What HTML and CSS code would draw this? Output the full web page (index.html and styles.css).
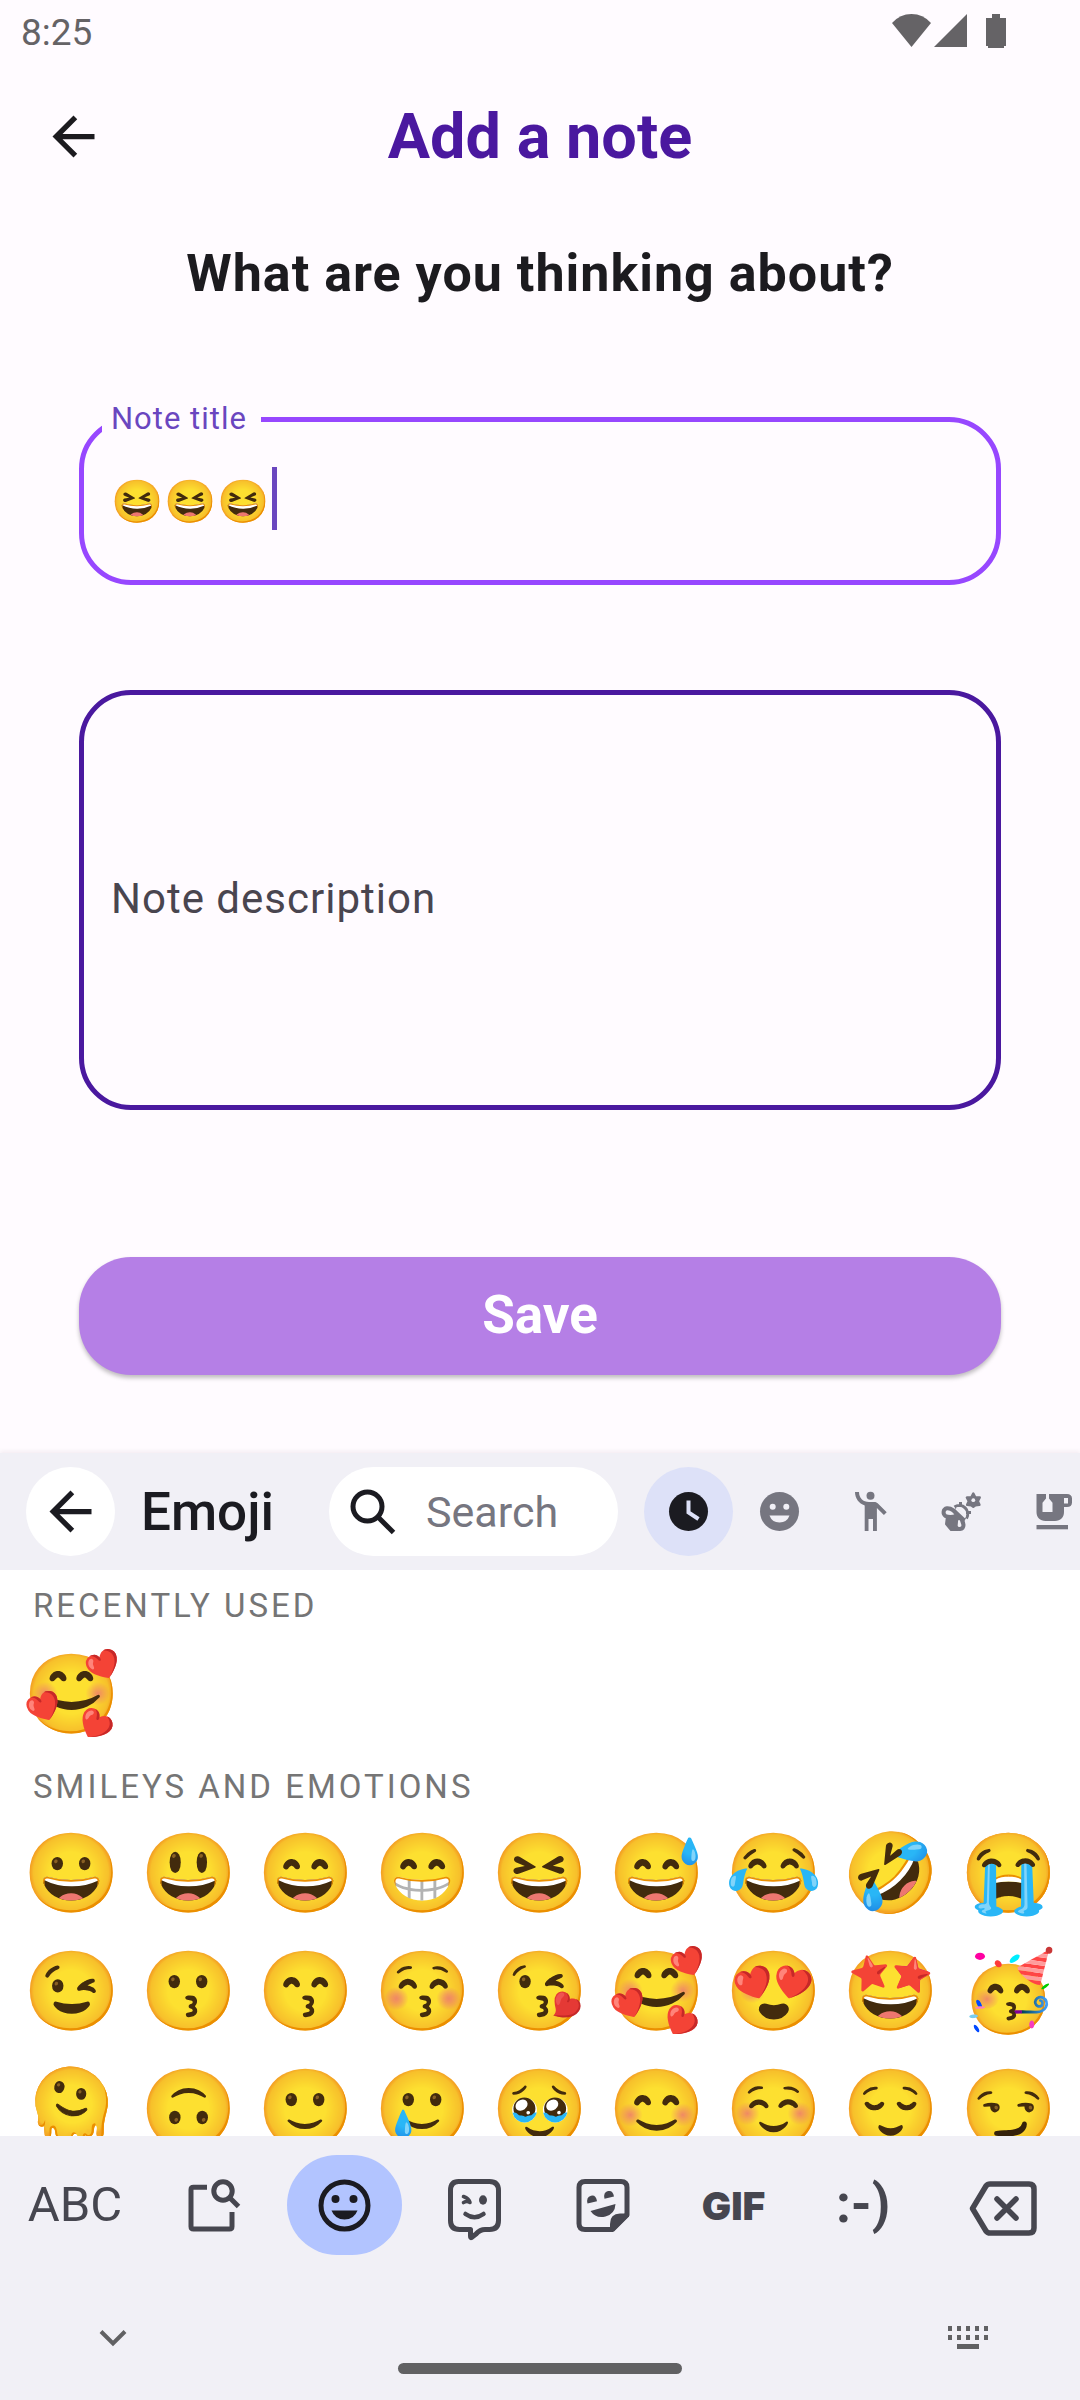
FILE: index.html
```
<!DOCTYPE html>
<html lang="en">
<head>
<meta charset="utf-8">
<meta name="viewport" content="width=device-width, initial-scale=1">
<title>Add a note</title>
<link rel="stylesheet" href="styles.css">
</head>
<body>
<div class="screen">
  <div class="status-bar">
    <span class="clock">8:25</span>
    <svg class="status-icons" viewBox="0 0 114 34" aria-hidden="true">
      <path d="M0 9Q8 0 19.500 0T39 9L19.500 33Z"/>
      <path d="M42 33L75 0V33Z"/>
      <path d="M100 0h8v4h6v28h-2v2h-16v-2h-2V4h6z"/>
    </svg>
  </div>

  <header class="app-bar">
    <button class="icon-button" type="button" aria-label="Back">
      <svg class="icon-back" viewBox="0 0 24 24"><path d="M20 11H7.830l5.590-5.590L12 4l-8 8 8 8 1.410-1.410L7.830 13H20z"/></svg>
    </button>
    <h1 class="title">Add a note</h1>
  </header>

  <main class="content">
    <form class="note-form">
      <h2 class="prompt">What are you thinking about?</h2>
      <fieldset class="title-field">
        <legend class="legend"><label for="note-title">Note title</label></legend>
        <div class="title-row">
          <input class="title-input" id="note-title" type="text" value="😆😆😆">
          <span class="caret"></span>
        </div>
      </fieldset>
      <textarea class="description" rows="1" placeholder="Note description" aria-label="Note description"></textarea>
      <button class="save" type="button">Save</button>
    </form>
  </main>

  <section class="keyboard" aria-label="Emoji keyboard">
    <div class="toolbar">
      <button class="round back" type="button" aria-label="Close emoji">
        <svg class="icon-back" viewBox="0 0 24 24"><path d="M20 11H7.830l5.590-5.590L12 4l-8 8 8 8 1.410-1.410L7.830 13H20z"/></svg>
      </button>
      <h2 class="toolbar-title">Emoji</h2>
      <label class="search">
        <svg class="icon-search" viewBox="0 0 46 46" fill="none" stroke="currentColor" stroke-width="5"><circle cx="17.500" cy="17.500" r="14.500"/><path d="M28 28L43.500 43.500"/></svg>
        <input class="search-input" type="text" placeholder="Search" aria-label="Search">
      </label>
      <div class="tabs">
        <button class="round tab active" type="button" aria-label="Recent">
          <svg class="icon-tab" viewBox="0 0 47 47"><circle cx="23.500" cy="23.500" r="19.500"/><path class="cut-line" d="M23.500 12.500V24.500L33.500 31"/></svg>
        </button>
        <button class="round tab" type="button" aria-label="Smileys">
          <svg class="icon-tab" viewBox="0 0 47 47"><circle cx="23.500" cy="23.500" r="19.500"/><g class="cut"><circle cx="16.700" cy="18.800" r="3"/><circle cx="30.300" cy="18.800" r="3"/><path d="M13.500 27.500H33.500Q31 34.500 23.500 34.500T13.500 27.500Z"/></g></svg>
        </button>
        <button class="round tab" type="button" aria-label="People">
          <svg class="icon-tab" viewBox="0 0 47 47"><circle cx="23.500" cy="7.800" r="4"/><path d="M8 4h4c0 6 4 10 10 10h5c2 0 3 .6 4.200 1.800L39.700 24.200l-2.800 2.800-7-7V43H26V31h-4.500V43H17.700V17.500C12 15.500 8 10.500 8 4z"/></svg>
        </button>
        <button class="round tab" type="button" aria-label="Animals and nature">
          <svg class="icon-tab" viewBox="0 0 47 47">
            <path d="M35.300 5.500l1.900 3.800 4.500.2-1.900 3.700 1.600 3.600-4 .4-2.100 1.500-2.100-1.500-4-.4 1.600-3.600-1.900-3.700 4.500-.2z" stroke="currentColor" stroke-width="2.500" stroke-linejoin="round"/><circle class="cut" cx="35.300" cy="12.200" r="1.900"/>
            <path d="M9 28L18 21L27 30L20 42H13L8 36Z" stroke="currentColor" stroke-width="2" stroke-linejoin="round"/>
            <path d="M16.500 19a8.500 8.500 0 0 1 12 11.500M22.500 14v5M28 24.500h5" fill="none" stroke="currentColor" stroke-width="3"/>
            <path class="wing" d="M18 28Q12 30 7.500 28C4.500 26 5 21 9 20.300C14 20 17.500 24 19.500 28"/>
            <path class="wing" d="M20.500 27.500Q25 32 25.500 37C25.500 42 18.500 42.500 17.700 38Q17.500 32 20.500 27.500"/>
            <path class="cut-thin" d="M18 20.500l9.500 9"/>
          </svg>
        </button>
        <button class="round tab" type="button" aria-label="Food and drink">
          <svg class="icon-tab" viewBox="0 0 47 47"><path fill-rule="evenodd" d="M7.500 6H17v4.500l-3.500 4.200V24h10V14.700L20 10.500V6h18c3 0 5 1.500 5 4.500v4c0 3-2 4.500-5 4.500h-3v5c0 5.500-3.500 9-9 9H16.500c-5.500 0-9-3.500-9-9zM35 10v5.500h4V10z"/><path d="M7.500 37H39v4.300H7.500z"/></svg>
        </button>
      </div>
    </div>

    <div class="emoji-panel">
      <h3 class="section-label">RECENTLY USED</h3>
      <div class="emoji-grid recent">
        <button class="emoji" type="button">🥰</button>
      </div>
      <h3 class="section-label">SMILEYS AND EMOTIONS</h3>
      <div class="emoji-grid">
        <button class="emoji" type="button">😀</button>
        <button class="emoji" type="button">😃</button>
        <button class="emoji" type="button">😄</button>
        <button class="emoji" type="button">😁</button>
        <button class="emoji" type="button">😆</button>
        <button class="emoji" type="button">😅</button>
        <button class="emoji" type="button">😂</button>
        <button class="emoji" type="button">🤣</button>
        <button class="emoji" type="button">😭</button>
        <button class="emoji" type="button">😉</button>
        <button class="emoji" type="button">😗</button>
        <button class="emoji" type="button">😙</button>
        <button class="emoji" type="button">😚</button>
        <button class="emoji" type="button">😘</button>
        <button class="emoji" type="button">🥰</button>
        <button class="emoji" type="button">😍</button>
        <button class="emoji" type="button">🤩</button>
        <button class="emoji" type="button">🥳</button>
        <button class="emoji" type="button">🫠</button>
        <button class="emoji" type="button">🙃</button>
        <button class="emoji" type="button">🙂</button>
        <button class="emoji" type="button">🥲</button>
        <button class="emoji" type="button">🥹</button>
        <button class="emoji" type="button">😊</button>
        <button class="emoji" type="button">☺️</button>
        <button class="emoji" type="button">😌</button>
        <button class="emoji" type="button">😏</button>
      </div>
    </div>

    <div class="mode-bar">
      <button class="mode abc" type="button">ABC</button>
      <button class="mode" type="button" aria-label="Search media">
        <svg class="icon-mode" viewBox="0 0 63 63" fill="none" stroke="currentColor" stroke-width="5"><path d="M24 13.300H10.500Q8 13.300 8 15.800V52.500Q8 55 10.500 55H46.500Q49 55 49 52.500V38"/><circle cx="40" cy="17" r="9.200"/><path d="M46.500 23.500L55.500 32.500"/></svg>
      </button>
      <button class="mode" type="button" aria-label="Emoji">
        <span class="pill">
          <svg class="icon-mode" viewBox="0 0 63 63"><circle cx="31.500" cy="31.500" r="23.500" fill="none" stroke="currentColor" stroke-width="5"/><circle cx="22.500" cy="25" r="4"/><circle cx="40.500" cy="25" r="4"/><path d="M18.500 36.500H44.500Q41 45.500 31.500 45.500T18.500 36.500Z"/></svg>
        </span>
      </button>
      <button class="mode" type="button" aria-label="Emoji kitchen">
        <svg class="icon-mode" viewBox="0 0 63 63" fill="none" stroke="currentColor" stroke-width="5" stroke-linecap="round" stroke-linejoin="round"><path d="M15.500 7.500H46.500Q55.500 7.500 55.500 16.500V46.500Q55.500 55.500 46.500 55.500H42Q37 55.500 33 60L28.500 63.500Q27.500 64 27.500 62V55.500H16.500Q7.500 55.500 7.500 46.500V16.500Q7.500 7.500 15.500 7.500Z"/><path d="M22.500 40Q31.500 46.500 40.500 40" stroke-width="4.500"/><path d="M20.500 22.500Q26 24.500 27 28.500Q24 26.500 20.500 28.500" stroke-width="3.600"/><ellipse cx="40" cy="26" rx="4" ry="4.700" fill="currentColor" stroke="none"/></svg>
      </button>
      <button class="mode" type="button" aria-label="Stickers">
        <svg class="icon-mode" viewBox="0 0 63 63"><path d="M13 7.500H49Q55 7.500 55 13.500V40.500L40 55.500H13Q7 55.500 7 49.500V13.500Q7 7.500 13 7.500Z" fill="none" stroke="currentColor" stroke-width="5"/><path d="M38 56V50Q38 39.500 48 39.500H57V42.500L42 57.500Z"/><path d="M15.500 29.500q-1.500-6.500 3.500-7.700t6 5.400zM32.500 24.800q-1.500-6.500 3.500-7.700t6 5.400zM18.500 37L43.500 30Q43 40 33.500 42.500T18.500 37Z"/></svg>
      </button>
      <button class="mode gif" type="button">GIF</button>
      <button class="mode emoticon" type="button">:-)</button>
      <button class="mode" type="button" aria-label="Delete">
        <svg class="icon-delete" viewBox="0 0 70 63" fill="none" stroke="currentColor" stroke-width="5.500" stroke-linejoin="round" stroke-linecap="round"><path d="M21 10H60Q65 10 65 15V54Q65 59 60 59H21Q18.500 59 17 57L3.500 34.500L17 12Q18.500 10 21 10Z"/><path d="M28 25L47 44M47 25L28 44"/></svg>
      </button>
    </div>

    <nav class="nav-bar">
      <button class="nav-button" type="button" aria-label="Hide keyboard">
        <svg class="icon-nav" viewBox="0 0 66 66" fill="none" stroke="currentColor" stroke-width="4"><path d="M22 26.500L34 38.500L46 26.500"/></svg>
      </button>
      <span class="home"></span>
      <button class="nav-button end" type="button" aria-label="Switch keyboard">
        <svg class="icon-nav" viewBox="0 0 66 66"><path d="M13 21h4v5h-4zM22 21h4v5h-4zM31 21h4v5h-4zM40 21h4v5h-4zM49 21h4v5h-4zM13 30h4v5h-4zM22 30h4v5h-4zM31 30h4v5h-4zM40 30h4v5h-4zM49 30h4v5h-4zM22 39h22v5H22z"/></svg>
      </button>
    </nav>
  </section>
</div>
</body>
</html>
```
FILE: styles.css
```
* {
  box-sizing: border-box;
}

body {
  margin: 0;
  background: #fffbff;
  color: #1c1b1f;
  font-family: Roboto, "Noto Color Emoji", sans-serif;
}

button,
input,
textarea {
  margin: 0;
  padding: 0;
  border: 0;
  background: none;
  color: inherit;
  font-family: inherit;
}

input,
textarea {
  outline: none;
}

h1,
h2,
h3 {
  margin: 0;
}

svg {
  display: block;
  flex: none;
  fill: currentColor;
}

svg[fill="none"] {
  fill: none;
}

.screen {
  display: flex;
  flex-direction: column;
  min-height: 100vh;
}

/* System status bar */
.status-bar {
  display: flex;
  align-items: flex-start;
  justify-content: space-between;
  height: 63px;
  padding: 14px 74px 0 21px;
  color: #656366;
}

.clock {
  font-size: 37px;
  line-height: 38px;
}

.status-icons {
  width: 114px;
  height: 34px;
}

/* App bar */
.app-bar {
  display: grid;
  grid-template-columns: 126px 1fr 126px;
  align-items: center;
  height: 147px;
  padding: 0 10px;
}

.icon-button {
  justify-self: center;
}

.icon-back {
  width: 63px;
  height: 63px;
}

.title {
  color: #4a189f;
  font-size: 63px;
  font-weight: 700;
  line-height: 80px;
  text-align: center;
}

/* Note form */
.note-form {
  display: flex;
  flex-direction: column;
  padding: 32px 79px 78px;
}

.prompt {
  font-size: 52px;
  font-weight: 700;
  line-height: 64px;
  letter-spacing: 1px;
  text-align: center;
}

.title-field {
  min-width: 0;
  height: 184px;
  margin: 95px 0 105px;
  padding: 0 0 0 18px;
  border: 5px solid #9747ff;
  border-radius: 52px;
}

.legend {
  padding: 0 14px 0 9px;
  color: #6a46bf;
  font-size: 31px;
  line-height: 36px;
  letter-spacing: 1px;
}

.title-row {
  display: flex;
  align-items: center;
  padding: 29px 0 0 9px;
}

.title-input {
  width: 161px;
  height: 64px;
  padding-top: 7px;
  font-size: 42px;
  letter-spacing: 1px;
}

.caret {
  width: 5px;
  height: 63px;
  background: #6a46bf;
}

.description {
  display: block;
  width: 100%;
  padding: 172px 27px 174px;
  border: 5px solid #4a189f;
  border-radius: 52px;
  font-size: 42px;
  line-height: 64px;
  letter-spacing: 1px;
  resize: none;
  overflow: hidden;
}

.description::placeholder {
  color: #49454f;
  opacity: 1;
}

.save {
  height: 118px;
  margin-top: 147px;
  padding-bottom: 2px;
  border-radius: 52px;
  background: #b57fe6;
  box-shadow: 0 3px 4px rgba(0, 0, 0, 0.25);
  color: #ffffff;
  font-size: 53px;
  font-weight: 700;
}

/* Emoji keyboard */
.keyboard {
  margin-top: auto;
  background: #f1f0f6;
  box-shadow: 0 -2px 4px rgba(60, 20, 40, 0.06);
  color: #46464f;
}

.toolbar {
  display: flex;
  align-items: center;
  height: 117px;
  padding-left: 26px;
}

.round {
  display: flex;
  flex: none;
  align-items: center;
  justify-content: center;
  width: 89px;
  height: 89px;
  border-radius: 50%;
}

.back {
  background: #ffffff;
  color: #1b1b21;
}

.toolbar-title {
  flex: none;
  width: 214px;
  padding-left: 26px;
  color: #1b1b21;
  font-size: 53px;
  font-weight: 500;
  line-height: 64px;
}

.search {
  display: flex;
  flex: 1;
  align-items: center;
  gap: 30px;
  min-width: 0;
  height: 89px;
  padding: 0 20px 0 21px;
  border-radius: 45px;
  background: #ffffff;
  color: #1b1b21;
}

.icon-search {
  width: 46px;
  height: 46px;
}

.search-input {
  flex: 1;
  min-width: 0;
  font-size: 43px;
}

.search-input::placeholder {
  color: #767680;
  opacity: 1;
}

.tabs {
  display: flex;
  gap: 2px;
  width: 436px;
  margin-left: 26px;
  overflow: hidden;
}

.tab {
  --tab-bg: #f1f0f6;
  background: var(--tab-bg);
  color: #767680;
}

.tab.active {
  --tab-bg: #dde1f8;
  color: #1b1b21;
}

.icon-tab {
  width: 47px;
  height: 47px;
}

.cut {
  fill: var(--tab-bg);
}

.cut-line {
  fill: none;
  stroke: var(--tab-bg);
  stroke-width: 4;
}

.cut-thin {
  fill: none;
  stroke: var(--tab-bg);
  stroke-width: 2;
}

.wing {
  fill: var(--tab-bg);
  stroke: currentColor;
  stroke-width: 4;
}

.emoji-panel {
  height: 566px;
  background: #ffffff;
  overflow: hidden;
}

.section-label {
  padding: 16px 33px 7px;
  color: #757575;
  font-size: 33px;
  font-weight: 400;
  line-height: 40px;
  letter-spacing: 3px;
}

.emoji-grid {
  display: grid;
  grid-template-columns: repeat(9, 1fr);
  padding: 1px 13px 0;
}

.recent {
  padding-top: 3px;
  margin-bottom: -3px;
}

.emoji {
  display: flex;
  align-items: center;
  justify-content: center;
  height: 118px;
  font-size: 78px;
  line-height: 96px;
}

.mode-bar {
  display: grid;
  grid-template-columns: 150px repeat(6, 1fr) 152px;
  padding-top: 19px;
}

.mode {
  display: flex;
  align-items: center;
  justify-content: center;
  height: 100px;
}

.abc {
  padding-bottom: 2px;
  font-size: 49px;
  font-weight: 400;
}

.gif {
  font-family: Inter, sans-serif;
  font-size: 39px;
  font-weight: 900;
}

.emoticon {
  padding-bottom: 2px;
  font-size: 53px;
  font-weight: 700;
}

.pill {
  display: flex;
  align-items: center;
  justify-content: center;
  width: 115px;
  height: 100px;
  border-radius: 50px;
  background: #b2c4ff;
  color: #1b1b21;
}

.icon-mode {
  width: 63px;
  height: 63px;
  overflow: visible;
}

.icon-delete {
  width: 70px;
  height: 63px;
}

/* System navigation bar */
.nav-bar {
  display: grid;
  grid-template-columns: 1fr auto 1fr;
  height: 145px;
  padding: 50px 79px 26px;
  color: #616163;
}

.nav-button {
  justify-self: start;
  align-self: start;
}

.nav-button.end {
  justify-self: end;
}

.icon-nav {
  width: 66px;
  height: 66px;
}

.home {
  align-self: end;
  width: 284px;
  height: 11px;
  border-radius: 6px;
  background: #616163;
}
```
